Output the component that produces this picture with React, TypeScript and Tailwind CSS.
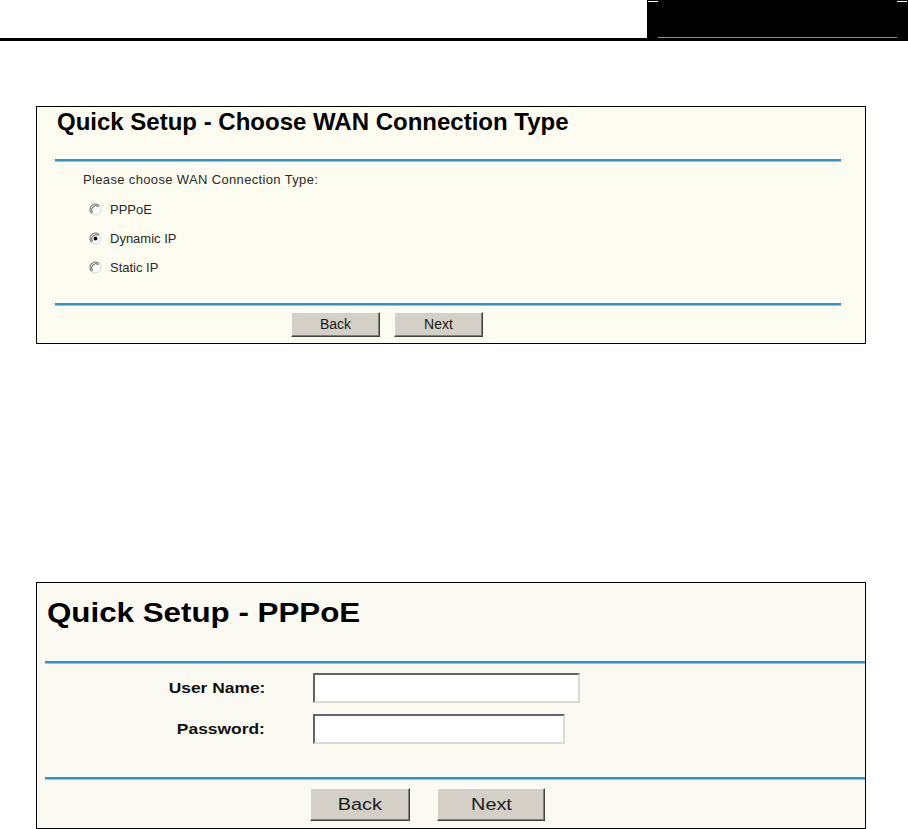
import React from 'react';

const options = [
  { id: 'pppoe', label: 'PPPoE', checked: false },
  { id: 'dynamic', label: 'Dynamic IP', checked: true },
  { id: 'static', label: 'Static IP', checked: false },
];

function Radio({ checked }: { checked: boolean }) {
  return (
    <svg width="13" height="13" viewBox="0 0 13 13" className="shrink-0">
      <circle cx="6.5" cy="6.5" r="5.5" fill="#ffffff" stroke="#d8d5cf" strokeWidth="1" />
      <path d="M2.6 10.4 A5.5 5.5 0 0 1 10.4 2.6" fill="none" stroke="#7a7a7a" strokeWidth="1.1" />
      <path d="M3.5 9.5 A4.3 4.3 0 0 1 9.5 3.5" fill="none" stroke="#3c3c3c" strokeWidth="0.9" />
      {checked && <circle cx="6.5" cy="6.5" r="1.9" fill="#000000" />}
    </svg>
  );
}

function ClassicButton({ label, className, textClass }: { label: string; className: string; textClass: string }) {
  return (
    <button
      type="button"
      className={`flex items-center justify-center bg-[#d4d0c8] border border-t-white border-l-white border-r-[#404040] border-b-[#404040] shadow-[inset_-1px_-1px_0_#808080] text-[#1a1a1a] ${className}`}
    >
      <span className={`inline-block ${textClass}`}>{label}</span>
    </button>
  );
}

function BlueRule({ className }: { className: string }) {
  return <div className={`h-[2px] bg-[#2d95c9] shadow-[0_1px_0_#8cc6e2] ${className}`} />;
}

export default function App() {
  return (
    <div className="w-[908px] h-[829px] bg-white font-['Liberation_Sans',Arial,sans-serif] overflow-hidden">
      {/* page header */}
      <div className="flex h-[38px]">
        <div className="ml-auto w-[261px] bg-black flex flex-col justify-between">
          <div className="flex justify-between px-px pt-px">
            <div className="w-[10px] h-px bg-white" />
            <div className="w-[10px] h-px bg-white" />
          </div>
          <div className="mx-[11px] h-px bg-[#8a8a8a]" />
        </div>
      </div>
      <div className="h-[3px] bg-black" />

      {/* WAN connection type */}
      <div className="mt-[65px] ml-[36px] w-[830px] h-[238px] border border-black bg-[#fcfcf0] flex flex-col">
        <div className="h-[52px] pt-px pl-[20px]">
          <h2 className="text-[24px] leading-[28px] font-bold text-black">Quick Setup - Choose WAN Connection Type</h2>
        </div>
        <BlueRule className="ml-[18px] w-[786px]" />
        <div className="mt-[7px] h-[24px] pl-[46px] text-[13px] leading-[24px] tracking-[0.35px] text-[#2a2a2a]">
          Please choose WAN Connection Type:
        </div>
        <div className="mt-[3px] flex flex-col">
          {options.map((o) => (
            <div key={o.id} className="h-[29px] flex items-center pl-[52px]">
              <Radio checked={o.checked} />
              <span className="ml-[8px] text-[13px] text-[#2a2a2a]">{o.label}</span>
            </div>
          ))}
        </div>
        <BlueRule className="mt-[21px] ml-[18px] w-[786px]" />
        <div className="mt-[7px] flex gap-[14px] pl-[254px]">
          <ClassicButton label="Back" className="w-[89px] h-[25px]" textClass="text-[14px]" />
          <ClassicButton label="Next" className="w-[89px] h-[25px]" textClass="text-[14px]" />
        </div>
      </div>

      {/* PPPoE */}
      <div className="mt-[238px] ml-[36px] w-[830px] h-[247px] border border-black bg-[#fafaf2] flex flex-col">
        <div className="h-[78px] pt-[15px] pl-[10px]">
          <h2 className="inline-block origin-left scale-x-[1.16] text-[27px] leading-[30px] font-bold text-black">
            Quick Setup - PPPoE
          </h2>
        </div>
        <BlueRule className="ml-[8px]" />
        <div className="mt-[10px] flex items-center h-[30px]">
          <div className="w-[228px] text-right">
            <span className="inline-block origin-right scale-x-[1.16] text-[15px] font-bold text-[#111]">User Name:</span>
          </div>
          <input type="text" className="ml-[48px] w-[267px] h-[30px] bg-white border-2 border-t-[#646464] border-l-[#646464] border-r-[#dcd9d2] border-b-[#dcd9d2] outline-none" />
        </div>
        <div className="mt-[11px] flex items-center h-[30px]">
          <div className="w-[228px] text-right">
            <span className="inline-block origin-right scale-x-[1.16] text-[15px] font-bold text-[#111]">Password:</span>
          </div>
          <input type="password" className="ml-[48px] w-[252px] h-[30px] bg-white border-2 border-t-[#646464] border-l-[#646464] border-r-[#dcd9d2] border-b-[#dcd9d2] outline-none" />
        </div>
        <BlueRule className="mt-[33px] ml-[8px]" />
        <div className="mt-[9px] flex pl-[273px]">
          <ClassicButton label="Back" className="w-[100px] h-[33px]" textClass="text-[16px] scale-x-[1.24]" />
          <ClassicButton label="Next" className="ml-[27px] w-[108px] h-[33px]" textClass="text-[16px] scale-x-[1.24]" />
        </div>
      </div>
    </div>
  );
}
